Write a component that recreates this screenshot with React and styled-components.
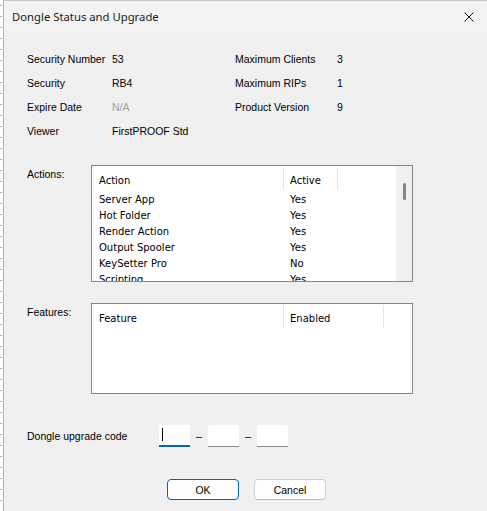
import styled, { createGlobalStyle } from "styled-components";

const GlobalStyle = createGlobalStyle`
	html, body {
		margin: 0;
		padding: 0;
		background: #ffffff;
	}
	body {
		width: 487px;
		height: 511px;
		overflow: hidden;
	}
`;

const Desktop = styled.div`
	display: flex;
	height: 511px;
	background: repeating-linear-gradient(180deg, #ffffff 0 5px, #b0b0b0 5px 6px, #ffffff 6px 11px);
	background-size: 2px 100%;
	background-repeat: no-repeat;
	background-position: 0 0;
`;

const Window = styled.div`
	margin-left: 3px;
	flex: 1;
	display: flex;
	flex-direction: column;
	background: #f0f0f0;
	border-left: 1px solid #b4b4b4;
	border-top: 1px solid #c8c8c8;
	font-family: "Liberation Sans", Arial, sans-serif;
	font-size: 10.5px;
	color: #000;
`;

const TitleBar = styled.div`
	height: 32px;
	display: flex;
	align-items: center;
	justify-content: space-between;
	padding: 0 8px;
	background: #f3f3f3;
`;

const Title = styled.span`
	font-family: "Noto Sans", "Segoe UI", sans-serif;
	font-size: 11.3px;
	color: #1a1a1a;
	padding-bottom: 1px;
`;

const CloseButton = styled.button`
	border: none;
	background: none;
	padding: 0;
	width: 20px;
	height: 20px;
	display: flex;
	align-items: center;
	justify-content: center;
`;

const Body = styled.div`
	display: flex;
	flex-direction: column;
	padding: 14px 0 0 23px;
`;

const InfoGrid = styled.div`
	display: grid;
	grid-template-columns: 85px 123px 102px auto;
	grid-auto-rows: 24px;
	align-items: center;
`;

const Value = styled.span`
	color: ${(p) => (p.$dim ? "#a0a0a0" : "#000")};
`;

const Section = styled.div`
	display: flex;
	margin-top: ${(p) => p.$top}px;
`;

const SectionLabel = styled.div`
	width: 64px;
	padding-top: 3px;
`;

const ListBox = styled.div`
	width: 322px;
	height: ${(p) => p.$height}px;
	box-sizing: border-box;
	border: 1px solid #828790;
	background: #fff;
	display: flex;
	overflow: hidden;
	font-family: "DejaVu Sans", Tahoma, sans-serif;
	font-size: 10px;
`;

const ListMain = styled.div`
	flex: 1;
	display: flex;
	flex-direction: column;
	overflow: hidden;
`;

const HeaderRow = styled.div`
	display: flex;
	height: 25px;
	flex-shrink: 0;
`;

const HeaderCell = styled.div`
	width: ${(p) => p.$width}px;
	padding: 3px 0 0 ${(p) => p.$pad}px;
	box-sizing: border-box;
	display: flex;
	align-items: center;
	border-right: 1px solid #e5e5e5;
	margin: 1px 0 1px;
`;

const Row = styled.div`
	display: flex;
	height: 16px;
	align-items: center;
	flex-shrink: 0;
`;

const Cell = styled.div`
	width: ${(p) => p.$width}px;
	padding-left: ${(p) => p.$pad}px;
	box-sizing: border-box;
	white-space: nowrap;
`;

const ScrollBar = styled.div`
	width: 16px;
	background: #f0f0f0;
	display: flex;
	justify-content: center;
	padding-top: 17px;
	box-sizing: border-box;
`;

const Thumb = styled.div`
	width: 3px;
	height: 17px;
	border-radius: 2px;
	background: #858585;
	margin-left: 1px;
`;

const CodeRow = styled.div`
	display: flex;
	align-items: center;
	margin-top: 31px;
`;

const CodeLabel = styled.div`
	width: 132px;
`;

const CodeInput = styled.div`
	width: 31px;
	height: 22px;
	box-sizing: border-box;
	background: #fff;
	border-bottom: ${(p) => (p.$focus ? "2px solid #0067c0" : "1px solid #8a8a8a")};
	border-radius: 2px 2px 0 0;
	position: relative;
`;

const Caret = styled.span`
	position: absolute;
	left: 3px;
	top: 3px;
	width: 1px;
	height: 13px;
	background: #000;
`;

const Dash = styled.span`
	width: 18px;
	text-align: center;
	font-size: 11px;
	padding-bottom: 1px;
`;

const ButtonRow = styled.div`
	display: flex;
	gap: 15px;
	margin-top: 32px;
	padding-left: 140px;
`;

const Button = styled.button`
	width: 72px;
	height: 21px;
	box-sizing: border-box;
	font-family: "Liberation Sans", Arial, sans-serif;
	font-size: 10.5px;
	color: #000;
	background: #fdfdfd;
	border: 1px solid ${(p) => (p.$primary ? "#0067c0" : "#d0d0d0")};
	border-bottom-color: ${(p) => (p.$primary ? "#0067c0" : "#b8b8b8")};
	border-radius: 4px;
	padding: 0;
`;

const actions = [
	["Server App", "Yes"],
	["Hot Folder", "Yes"],
	["Render Action", "Yes"],
	["Output Spooler", "Yes"],
	["KeySetter Pro", "No"],
	["Scripting", "Yes"],
];

const info = [
	["Security Number", "53", "Maximum Clients", "3"],
	["Security", "RB4", "Maximum RIPs", "1"],
	["Expire Date", "N/A", "Product Version", "9"],
	["Viewer", "FirstPROOF Std", "", ""],
];

export default function App() {
	return (
		<>
			<GlobalStyle />
			<Desktop>
				<Window>
					<TitleBar>
						<Title>Dongle Status and Upgrade</Title>
						<CloseButton aria-label="Close">
							<svg width="10" height="10" viewBox="0 0 10 10">
								<path d="M0.5 0.5 L9.5 9.5 M9.5 0.5 L0.5 9.5" stroke="#111" strokeWidth="1" />
							</svg>
						</CloseButton>
					</TitleBar>
					<Body>
						<InfoGrid>
							{info.map(([l1, v1, l2, v2]) => [
								<span key={l1 + "a"}>{l1}</span>,
								<Value key={l1 + "b"} $dim={v1 === "N/A"}>{v1}</Value>,
								<span key={l1 + "c"}>{l2}</span>,
								<Value key={l1 + "d"}>{v2}</Value>,
							])}
						</InfoGrid>

						<Section $top={22}>
							<SectionLabel>Actions:</SectionLabel>
							<ListBox $height={117}>
								<ListMain>
									<HeaderRow>
										<HeaderCell $width={192} $pad={7}>Action</HeaderCell>
										<HeaderCell $width={54} $pad={6}>Active</HeaderCell>
									</HeaderRow>
									{actions.map(([name, active]) => (
										<Row key={name}>
											<Cell $width={192} $pad={7}>{name}</Cell>
											<Cell $width={54} $pad={6}>{active}</Cell>
										</Row>
									))}
								</ListMain>
								<ScrollBar>
									<Thumb />
								</ScrollBar>
							</ListBox>
						</Section>

						<Section $top={21}>
							<SectionLabel>Features:</SectionLabel>
							<ListBox $height={91}>
								<ListMain>
									<HeaderRow>
										<HeaderCell $width={192} $pad={7}>Feature</HeaderCell>
										<HeaderCell $width={100} $pad={6}>Enabled</HeaderCell>
									</HeaderRow>
								</ListMain>
							</ListBox>
						</Section>

						<CodeRow>
							<CodeLabel>Dongle upgrade code</CodeLabel>
							<CodeInput $focus>
								<Caret />
							</CodeInput>
							<Dash>–</Dash>
							<CodeInput />
							<Dash>–</Dash>
							<CodeInput />
						</CodeRow>

						<ButtonRow>
							<Button $primary>OK</Button>
							<Button>Cancel</Button>
						</ButtonRow>
					</Body>
				</Window>
			</Desktop>
		</>
	);
}
